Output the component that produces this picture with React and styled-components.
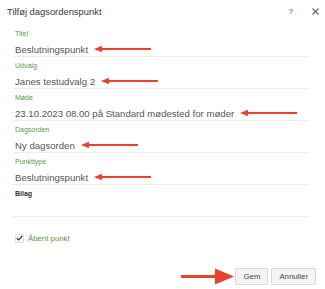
import React from 'react';
import styled, { createGlobalStyle } from 'styled-components';

const GlobalStyle = createGlobalStyle`
  body {
    margin: 0;
    background: #fff;
    font-family: "Liberation Sans", Arial, sans-serif;
  }
`;

const FIELDS = [
  { label: 'Titel', value: 'Beslutningspunkt', arrow: true },
  { label: 'Udvalg', value: 'Janes testudvalg 2', arrow: true },
  { label: 'Møde', value: '23.10.2023 08.00 på Standard mødested for møder', arrow: true },
  { label: 'Dagsorden', value: 'Ny dagsorden', arrow: true },
  { label: 'Punkttype', value: 'Beslutningspunkt', arrow: true },
  { label: 'Bilag', value: '', plain: true },
];

const SmallArrow = () => (
  <ArrowSvg width="58" height="8" viewBox="0 0 58 8">
    <line x1="6" y1="4" x2="57" y2="4" stroke="#e8432d" strokeWidth="1.8" />
    <polygon points="0,4 8,0.8 8,7.2" fill="#e8432d" />
  </ArrowSvg>
);

const BigArrow = () => (
  <svg width="53" height="17" viewBox="0 0 53 17">
    <line x1="0" y1="8.5" x2="36" y2="8.5" stroke="#e8432d" strokeWidth="3" />
    <polygon points="34,0.5 53,8.5 34,16.5" fill="#e8432d" />
  </svg>
);

const App = () => {
  return (
    <>
      <GlobalStyle />
      <Dialog>
        <Header>
          <Title>Tilføj dagsordenspunkt</Title>
          <HeaderTools>
            <HelpBtn>?</HelpBtn>
            <CloseBtn>
              <svg width="7" height="7" viewBox="0 0 7 7">
                <path d="M0.5 0.5 L6.5 6.5 M6.5 0.5 L0.5 6.5" stroke="#666" strokeWidth="1.2" />
              </svg>
            </CloseBtn>
          </HeaderTools>
        </Header>
        <Body>
          {FIELDS.map((f) => (
            <Field key={f.label}>
              <Label plain={f.plain}>{f.label}</Label>
              <Value>
                {f.value}
                {f.arrow && <SmallArrow />}
              </Value>
            </Field>
          ))}
          <CheckRow>
            <CheckBox>
              <svg width="7" height="6" viewBox="0 0 7 6">
                <path d="M0.8 3.2 L2.7 5 L6.3 0.8" fill="none" stroke="#333" strokeWidth="1.2" />
              </svg>
            </CheckBox>
            <CheckLabel>Åbent punkt</CheckLabel>
          </CheckRow>
        </Body>
        <Footer>
          <BigArrow />
          <Button>Gem</Button>
          <Button>Annuller</Button>
        </Footer>
      </Dialog>
    </>
  );
};

export default App;

const Dialog = styled.div`
  width: 325px;
  height: 289px;
  background: #fff;
  display: flex;
  flex-direction: column;
`;

const Header = styled.header`
  display: flex;
  align-items: center;
  justify-content: space-between;
  height: 22px;
  padding: 0 6px 0 7px;
  margin-bottom: 3px;
`;

const Title = styled.h1`
  margin: 0;
  font-size: 9.4px;
  font-weight: 400;
  color: #3a3a3a;
`;

const HeaderTools = styled.div`
  display: flex;
  align-items: center;
  gap: 19px;
  color: #777;
`;

const HelpBtn = styled.span`
  font-size: 7px;
  font-weight: 700;
`;

const CloseBtn = styled.span`
  display: flex;
  align-items: center;
`;

const Body = styled.div`
  padding: 0 15px 0 13px;
`;

const Field = styled.div`
  padding: 4px 0 0 2px;
  border-bottom: 1px solid #ececec;
`;

const Label = styled.div`
  font-size: 7px;
  line-height: 10px;
  font-weight: ${(p) => (p.plain ? 700 : 500)};
  color: ${(p) => (p.plain ? '#333' : '#5a9a3e')};
`;

const Value = styled.div`
  display: flex;
  align-items: center;
  margin-top: 3px;
  height: 14px;
  font-size: 9.6px;
  color: #555;
  white-space: nowrap;
`;

const ArrowSvg = styled.svg`
  margin-left: 6px;
  flex-shrink: 0;
`;

const CheckRow = styled.label`
  display: flex;
  align-items: center;
  gap: 4px;
  margin-top: 15px;
  padding-left: 2px;
  height: 12px;
`;

const CheckBox = styled.span`
  display: flex;
  align-items: center;
  justify-content: center;
  width: 7px;
  height: 7px;
  border: 1px solid #ddd;
  border-radius: 1px;
  background: #fafafa;
`;

const CheckLabel = styled.span`
  font-size: 7.8px;
  color: #5a9a3e;
`;

const Footer = styled.footer`
  display: flex;
  align-items: center;
  justify-content: flex-end;
  gap: 3px;
  margin-top: 24px;
  padding-right: 9px;

  & > svg {
    margin-right: -2px;
  }
`;

const Button = styled.button`
  height: 17px;
  padding: 0 7px;
  min-width: 32px;
  font-family: "Liberation Sans", Arial, sans-serif;
  font-size: 7.8px;
  color: #444;
  background: #f4f4f4;
  border: 1px solid #d9d9d9;
  border-radius: 1px;
`;
